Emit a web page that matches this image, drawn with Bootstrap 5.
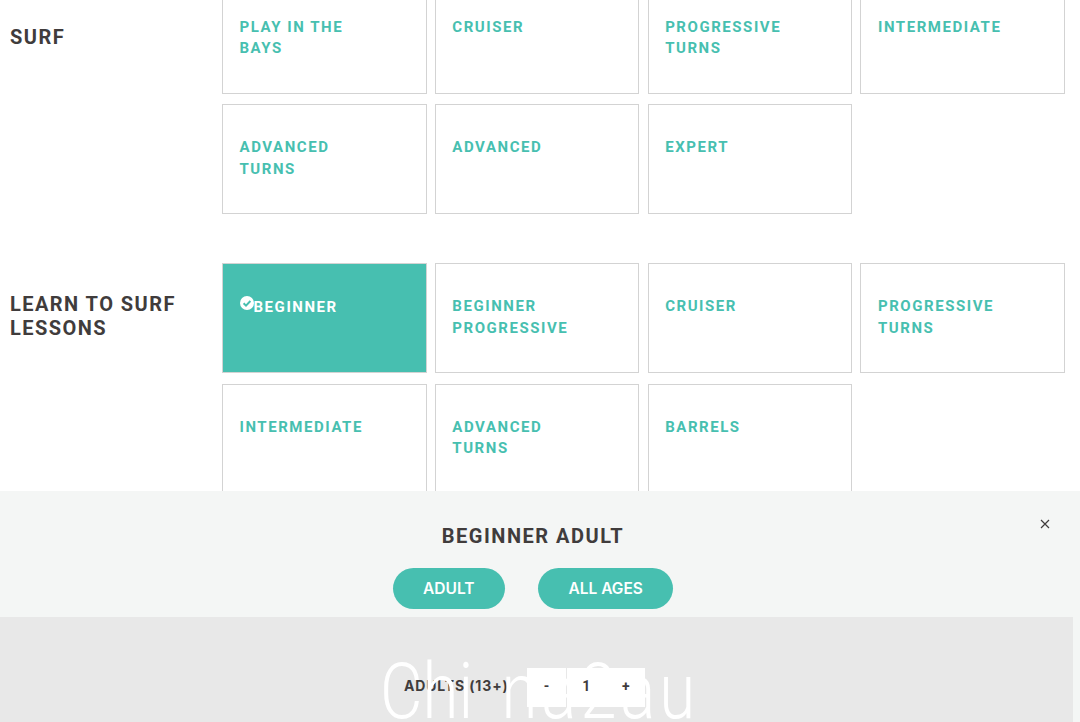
<!DOCTYPE html>
<html lang="en">
<head>
    <meta charset="UTF-8">
    <meta name="viewport" content="width=device-width, initial-scale=1.0">
    <title>Surf lessons</title>
    <link href="https://cdn.jsdelivr.net/npm/bootstrap@5.3.2/dist/css/bootstrap.min.css" rel="stylesheet">
    <style>
        html, body {
            height: 722px;
            overflow: hidden;
        }
        body {
            background: #fff;
            font-family: Roboto, "Liberation Sans", sans-serif;
            color: #403c3c;
        }
        .lesson-page {
            margin-top: -16.3px;
            padding: 0 15px 0 10px;
        }
        .lesson-group {
            display: flex;
            margin-bottom: 49.3px;
        }
        .group-title {
            width: 212px;
            flex: none;
            padding-top: 29px;
            margin: 0;
            font-size: 20px;
            line-height: 24px;
            font-weight: 700;
            letter-spacing: 1.45px;
        }
        .group-title.is-first {
            padding-top: 41px;
        }
        .option-grid {
            flex: 1;
            display: grid;
            grid-template-columns: repeat(4, 1fr);
            column-gap: 8.3px;
            row-gap: 10.4px;
        }
        .option-tile {
            height: 110px;
            padding: 32px 16.5px 0;
            border: 1px solid #d3d3d3;
            font-size: 15px;
            line-height: 21.6px;
            font-weight: 700;
            letter-spacing: 1.55px;
            color: #47bfb0;
        }
        .option-tile.is-selected {
            padding-top: 31.3px;
            background: #47bfb0;
            color: #fff;
        }
        .tick-icon {
            width: 14px;
            height: 14px;
            vertical-align: 2px;
        }
        .booking-panel {
            position: fixed;
            left: 0;
            right: 0;
            bottom: 0;
            height: 231px;
            background: #f4f6f5;
        }
        .panel-title {
            margin: 0;
            padding: 32px 14px 0 0;
            font-size: 20px;
            line-height: 26px;
            font-weight: 700;
            letter-spacing: 1.5px;
        }
        .panel-close {
            position: absolute;
            top: 28px;
            right: 30px;
            width: 10px;
            height: 10px;
        }
        .panel-pills {
            gap: 33px;
            margin-top: 19px;
            height: 49px;
            padding-right: 14px;
        }
        .pill-btn {
            height: 41px;
            padding: 0 30.5px;
            border: 0;
            border-radius: 21px;
            background: #47bfb0;
            color: #fff;
            font-family: Inter, Roboto, sans-serif;
            font-size: 15.5px;
            font-weight: 600;
        }
        .counter-band {
            height: 105px;
            margin-right: 7px;
            padding: 51px 0 0 404px;
            background: #e8e8e8;
            gap: 20px;
        }
        .counter-label {
            width: 103px;
            font-family: Inter, Roboto, sans-serif;
            font-size: 14px;
            line-height: 36px;
            font-weight: 700;
            letter-spacing: .85px;
            white-space: nowrap;
        }
        .counter-box {
            position: relative;
            z-index: 2;
            width: 39px;
            height: 39px;
            margin-right: .7px;
            background: #fff;
            font-size: 14px;
            line-height: 36px;
            font-weight: 700;
            text-align: center;
        }
        .watermark {
            position: absolute;
            z-index: 1;
            left: 380px;
            top: 156px;
            font-family: Roboto, sans-serif;
            font-weight: 300;
            font-size: 77px;
            line-height: 90px;
            letter-spacing: 4.5px;
            word-spacing: 10px;
            color: #fff;
            white-space: nowrap;
            transform: scaleX(.85);
            transform-origin: left;
        }
        .watermark-tight {
            letter-spacing: 0;
        }
    </style>
</head>
<body>
    <div class="lesson-page">
        <section class="lesson-group">
            <h2 class="group-title is-first">SURF</h2>
            <div class="option-grid">
                <div class="option-tile">PLAY IN THE<br>BAYS</div>
                <div class="option-tile">CRUISER</div>
                <div class="option-tile">PROGRESSIVE<br>TURNS</div>
                <div class="option-tile">INTERMEDIATE</div>
                <div class="option-tile">ADVANCED<br>TURNS</div>
                <div class="option-tile">ADVANCED</div>
                <div class="option-tile">EXPERT</div>
            </div>
        </section>
        <section class="lesson-group">
            <h2 class="group-title">LEARN TO SURF<br>LESSONS</h2>
            <div class="option-grid">
                <div class="option-tile is-selected">
                    <svg class="tick-icon" viewBox="0 0 14 14"><circle cx="7" cy="7" r="7" fill="#fff"/><path d="M3.6 7.2 6 9.6l4.4-4.6" fill="none" stroke="#47bfb0" stroke-width="2"/></svg>BEGINNER
                </div>
                <div class="option-tile">BEGINNER<br>PROGRESSIVE</div>
                <div class="option-tile">CRUISER</div>
                <div class="option-tile">PROGRESSIVE<br>TURNS</div>
                <div class="option-tile">INTERMEDIATE</div>
                <div class="option-tile">ADVANCED<br>TURNS</div>
                <div class="option-tile">BARRELS</div>
            </div>
        </section>
    </div>

    <div class="booking-panel">
        <svg class="panel-close" viewBox="0 0 10 10"><path d="M1 1l8 8M9 1l-8 8" stroke="#403c3c" stroke-width="1.2"/></svg>
        <h3 class="panel-title text-center">BEGINNER ADULT</h3>
        <div class="panel-pills d-flex justify-content-center">
            <button class="pill-btn" type="button">ADULT</button>
            <button class="pill-btn" type="button">ALL AGES</button>
        </div>
        <div class="counter-band d-flex">
            <div class="counter-label">ADULTS (13+)</div>
            <div class="d-flex">
                <div class="counter-box">-</div>
                <div class="counter-box">1</div>
                <div class="counter-box">+</div>
            </div>
        </div>
        <div class="watermark"><span class="watermark-tight">Chi</span> na2au</div>
    </div>
</body>
</html>
